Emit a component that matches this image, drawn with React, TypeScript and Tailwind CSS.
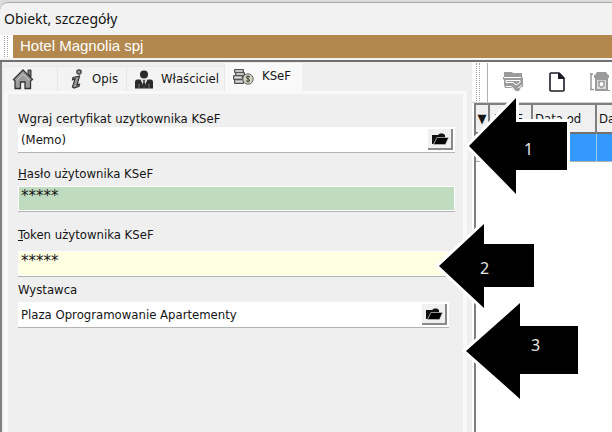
import { ReactNode } from "react";

const HomeIcon = () => (
  <svg width="22" height="22" viewBox="0 0 22 22" aria-hidden="true">
    <path d="M16 2h3v7l-3-3z" fill="#777" stroke="#333" />
    <path
      d="M11 2 1.500 11.500 3 13v7.500h5.500V14h4.500v6.500h5.500V13l2-1.500z"
      fill="#9c9c9c"
      stroke="#333"
      strokeWidth="1.300"
    />
    <path d="M4.500 12.500 11 6l6.500 6.500" fill="none" stroke="#c4c4c4" />
  </svg>
);

const InfoIcon = () => (
  <svg width="14" height="20" viewBox="0 0 14 20" aria-hidden="true">
    <circle cx="9" cy="3" r="2.200" fill="#999" stroke="#333" strokeWidth="1.200" />
    <path
      d="M3 8.500 9.500 7 7 16l2.500-.8-.5 2L4 19l-1.500-1L5 10l-2.500.8z"
      fill="#999"
      stroke="#333"
      strokeWidth="1.200"
    />
  </svg>
);

const OwnerIcon = () => (
  <svg width="18" height="19" viewBox="0 0 18 19" aria-hidden="true">
    <circle cx="9" cy="4.500" r="4" fill="#2a2a2a" />
    <path d="M0 12q0-2.500 2.500-2.500H5.500L9 15l3.500-5.500h3q2.500 0 2.500 2.500v6.500H0z" fill="#2a2a2a" />
    <path d="M5.500 9 9 18l3.500-9z" fill="#ddd" />
    <path d="M8 10h2l-.5 1.500L10.500 15 9 18l-1.500-3 1-3.500z" fill="#2a2a2a" />
    <path d="M4 14v4M14 14v4" stroke="#777" />
  </svg>
);

const MoneyIcon = () => (
  <svg width="21" height="17" viewBox="0 0 21 17" aria-hidden="true">
    <g fill="#a5a8a5" stroke="#555">
      <path d="M1.500 1.500h9v3h-9zM2.500 4.500h9v3h-9zM.5 7.500h9v4h-9zM1.500 11.500h9v4h-9z" />
    </g>
    <path d="M3 3h6M4 6h6M2 9.500h6M3 13.500h6" stroke="#e2e2e2" />
    <circle cx="15" cy="11" r="5.200" fill="#d5d2bd" stroke="#666" />
    <path
      d="M17 9q-2-1.500-3.500-.3-.8 1.300 1.500 2.100 2.300.8 1.500 2.200-1.500 1-3.500-.3M15 7.500v7"
      fill="none"
      stroke="#444"
    />
  </svg>
);

const FolderIcon = () => (
  <svg width="18" height="12" viewBox="0 0 18 12" aria-hidden="true">
    <path d="M1 11V2h6l2-1.500h3L14 2v2.500H6L2.500 11z" fill="#111" />
    <path d="M2.500 11.500 6 4.500h11.500L14.500 11.500z" fill="#000" stroke="#ccc" strokeWidth=".6" />
  </svg>
);

const DrawerIcon = () => (
  <svg width="22" height="21" viewBox="0 0 22 21" aria-hidden="true">
    <path d="M2 1h8l1 1h9v4l1 1v9h-2l-2 4h-3l-4-3H3l-1-3V9L1 8V6h1z" fill="#9b9b9b" />
    <path d="M2 6.500h17M4 9.500h14v2l-4 2.500-3-2.500H4z" fill="none" stroke="#fff" />
    <path d="M4 15.500h5l3 2.500M16 17l4-3" fill="none" stroke="#fff" />
  </svg>
);

const PageIcon = () => (
  <svg width="16" height="20" viewBox="0 0 16 20" aria-hidden="true">
    <path d="M1 2q0-1 1-1h8l5 5v12q0 1-1 1H2q-1 0-1-1z" fill="#fff" stroke="#1c1c28" strokeWidth="1.600" />
    <path d="M9 1h2l4 4.500V7H9z" fill="#1c1c28" />
  </svg>
);

const TrashIcon = () => (
  <svg width="20" height="21" viewBox="0 0 20 21" className="shrink-0" aria-hidden="true">
    <path d="M1 2v17M0 3h3M0 18.500h4" stroke="#9b9b9b" strokeWidth="1.500" />
    <path d="M7 1h9l2 3h1v3H4V4h1z" fill="#9b9b9b" />
    <path d="M6 8h11v11H6z" fill="#ddd" stroke="#9b9b9b" strokeWidth="2" />
    <path d="M9 10.500h5v4l-2.500 2L9 14.500z" fill="#fff" stroke="#9b9b9b" strokeWidth="1.500" />
    <path d="M14 19.500h6" stroke="#9b9b9b" />
  </svg>
);

interface TabProps {
  label?: string;
  title: string;
  active?: boolean;
  className: string;
  children: ReactNode;
}

const Tab = ({ label, title, active, className, children }: TabProps) => (
  <button
    type="button"
    role="tab"
    aria-label={title}
    aria-selected={active ?? false}
    className={`flex items-center ${
      active
        ? "h-[28px] bg-[#f9f9f9] pb-[2px]"
        : "h-[25px] border-t border-r border-[#e8e8e8] bg-[#f3f3f3]"
    } ${className}`}
  >
    {children}
    {label && <span>{label}</span>}
  </button>
);

interface FieldProps {
  id: string;
  label: ReactNode;
  value: string;
  tone?: string;
  browse?: boolean;
  className?: string;
}

const Field = ({ id, label, value, tone = "bg-white", browse, className = "" }: FieldProps) => (
  <div className={`flex flex-col ${className}`}>
    <label htmlFor={id} className="h-[17px] leading-[17px]">
      {label}
    </label>
    <div className="flex h-[26px] border-b border-[#b4b4b4] bg-white p-px">
      <input
        id={id}
        defaultValue={value}
        className={`min-w-0 flex-1 px-[2px] outline-none ${tone}`}
      />
      {browse && (
        <button
          type="button"
          aria-label="Przeglądaj"
          className="m-px flex w-[25px] items-center justify-center border-r-2 border-b-2 border-[#8a8a8a] bg-[#f0f0f0]"
        >
          <FolderIcon />
        </button>
      )}
    </div>
  </div>
);

const Grip = () => (
  <span className="flex gap-[2px] py-px">
    <span className="border-l border-dotted border-[#a0a0a0]" />
    <span className="border-l border-dotted border-[#a0a0a0]" />
  </span>
);

interface ArrowProps {
  label: string;
  width: number;
  height: number;
  points: string;
  className: string;
  labelClassName: string;
}

const Arrow = ({ label, width, height, points, className, labelClassName }: ArrowProps) => (
  <div className={`absolute ${className}`}>
    <svg width={width} height={height} className="overflow-visible" aria-hidden="true">
      <polygon points={points} fill="#000" stroke="#fff" strokeWidth="6" />
      <polygon points={points} fill="#000" />
    </svg>
    <span
      className={`absolute font-['Noto_Sans',sans-serif] text-base leading-5 text-[#e4e4e4] ${labelClassName}`}
    >
      {label}
    </span>
  </div>
);

const App = () => (
  <div className="flex min-h-screen flex-col bg-[#dcdcdc] pt-[2px] font-['DejaVu_Sans_Condensed','DejaVu_Sans',sans-serif] text-[13px] text-[#151515]">
    <div className="flex flex-1 flex-col rounded-tl-lg border-t border-[#aaa] bg-[#f2f2f2]">
      <header>
        <h1 className="h-8 px-1 font-['Noto_Sans',sans-serif] text-sm leading-8">
          Obiekt, szczegóły
        </h1>
        <div className="flex h-[23px] bg-white">
          <span className="flex w-[13px] pl-1">
            <Grip />
          </span>
          <h2 className="flex-1 bg-[#b2884e] px-[7px] font-['Liberation_Sans',sans-serif] text-[15px] leading-[22px] text-white">
            Hotel Magnolia spj
          </h2>
        </div>
      </header>

      <main className="mt-[2px] grid flex-1 grid-cols-[minmax(0,472fr)_minmax(0,140fr)] border-t-2 border-[#707070]">
        <section className="flex flex-col border-l-2 border-[#808080] bg-[#efefef] pt-px pr-[5px] pl-[2px]">
          <div role="tablist" className="flex items-end border-b-[3px] border-[#f9f9f9]">
            <Tab title="Obiekt" className="w-[54px] pl-2">
              <HomeIcon />
            </Tab>
            <Tab title="Opis" label="Opis" className="w-[69px] gap-2 pl-3">
              <InfoIcon />
            </Tab>
            <Tab title="Właściciel" label="Właściciel" className="w-[98px] gap-2 pl-2">
              <OwnerIcon />
            </Tab>
            <Tab title="KSeF" label="KSeF" active className="w-[77px] gap-2 pl-2">
              <MoneyIcon />
            </Tab>
          </div>
          <form className="flex flex-1 flex-col border-x-4 border-[#f9f9f9] pt-4 pr-2 pl-[10px]">
            <Field id="cert" label="Wgraj certyfikat uzytkownika KSeF" value="(Memo)" browse />
            <Field
              id="password"
              className="mt-3 gap-1"
              label={
                <>
                  <u>H</u>asło użytownika KSeF
                </>
              }
              value="*****"
              tone="bg-[#c0dcc0] pb-1 font-['DejaVu_Sans',sans-serif] text-[15px]"
            />
            <Field
              id="token"
              className="mt-[14px] gap-2"
              label={
                <>
                  <u>T</u>oken użytownika KSeF
                </>
              }
              value="*****"
              tone="bg-[#ffffe1] pb-1 font-['DejaVu_Sans',sans-serif] text-[15px]"
            />
            <Field
              id="issuer"
              className="mt-1 mr-[6px] gap-1"
              label="Wystawca"
              value="Plaza Oprogramowanie Apartementy"
              browse
            />
          </form>
        </section>

        <section className="relative flex flex-col bg-white">
          <div className="flex h-[41px] overflow-hidden border-b border-[#d0d0d0] pl-1">
            <Grip />
            <div className="mt-px flex items-center gap-[25px] border-l border-[#b0b0b0] ml-[7px] pb-[2px] pl-[14px]">
              <button type="button" aria-label="Archiwizuj">
                <DrawerIcon />
              </button>
              <button type="button" aria-label="Nowy">
                <PageIcon />
              </button>
              <button type="button" aria-label="Usuń">
                <TrashIcon />
              </button>
            </div>
          </div>
          <div className="ml-[2px] flex flex-1 flex-col overflow-hidden border-t-2 border-l-2 border-[#808080] bg-white">
            <table className="w-[190px] table-fixed border-collapse">
              <thead>
                <tr className="h-[28px] border-b-2 border-[#707070] bg-[#f0f0f0] text-left">
                  <th className="w-[13px] border-r-2 border-[#808080] text-center font-normal">▼</th>
                  <th className="w-[43px] border-r-2 border-[#808080] pl-1 font-normal">KSeF</th>
                  <th className="w-[64px] border-r-2 border-[#808080] pl-[2px] font-normal">Data od</th>
                  <th className="pl-[2px] font-normal">Data do</th>
                </tr>
              </thead>
              <tbody>
                <tr className="h-[28px] border-b border-[#b0b0b0] bg-[#3399ff]">
                  <td className="border-r border-[#9ccbf5] bg-[#f0f0f0]" />
                  <td className="border-r border-[#9ccbf5]" />
                  <td className="border-r border-[#9ccbf5]" />
                  <td />
                </tr>
              </tbody>
            </table>
          </div>

          <Arrow
            label="1"
            width={98}
            height={96}
            points="0,48 47,0 47,24 98,24 98,72 47,72 47,96"
            className="top-[36px] -left-[3px]"
            labelClassName="top-[41px] left-[55px]"
          />
          <Arrow
            label="2"
            width={95}
            height={84}
            points="0,42 45,0 45,20 95,20 95,63 45,63 45,84"
            className="top-[162px] -left-[33px]"
            labelClassName="top-[34px] left-[41px]"
          />
          <Arrow
            label="3"
            width={112}
            height={96}
            points="0,48 54,0 54,23 112,23 112,71 54,71 54,96"
            className="top-[241px] -left-[6px]"
            labelClassName="top-[32px] left-[65px]"
          />
        </section>
      </main>
    </div>
  </div>
);

export default App;
